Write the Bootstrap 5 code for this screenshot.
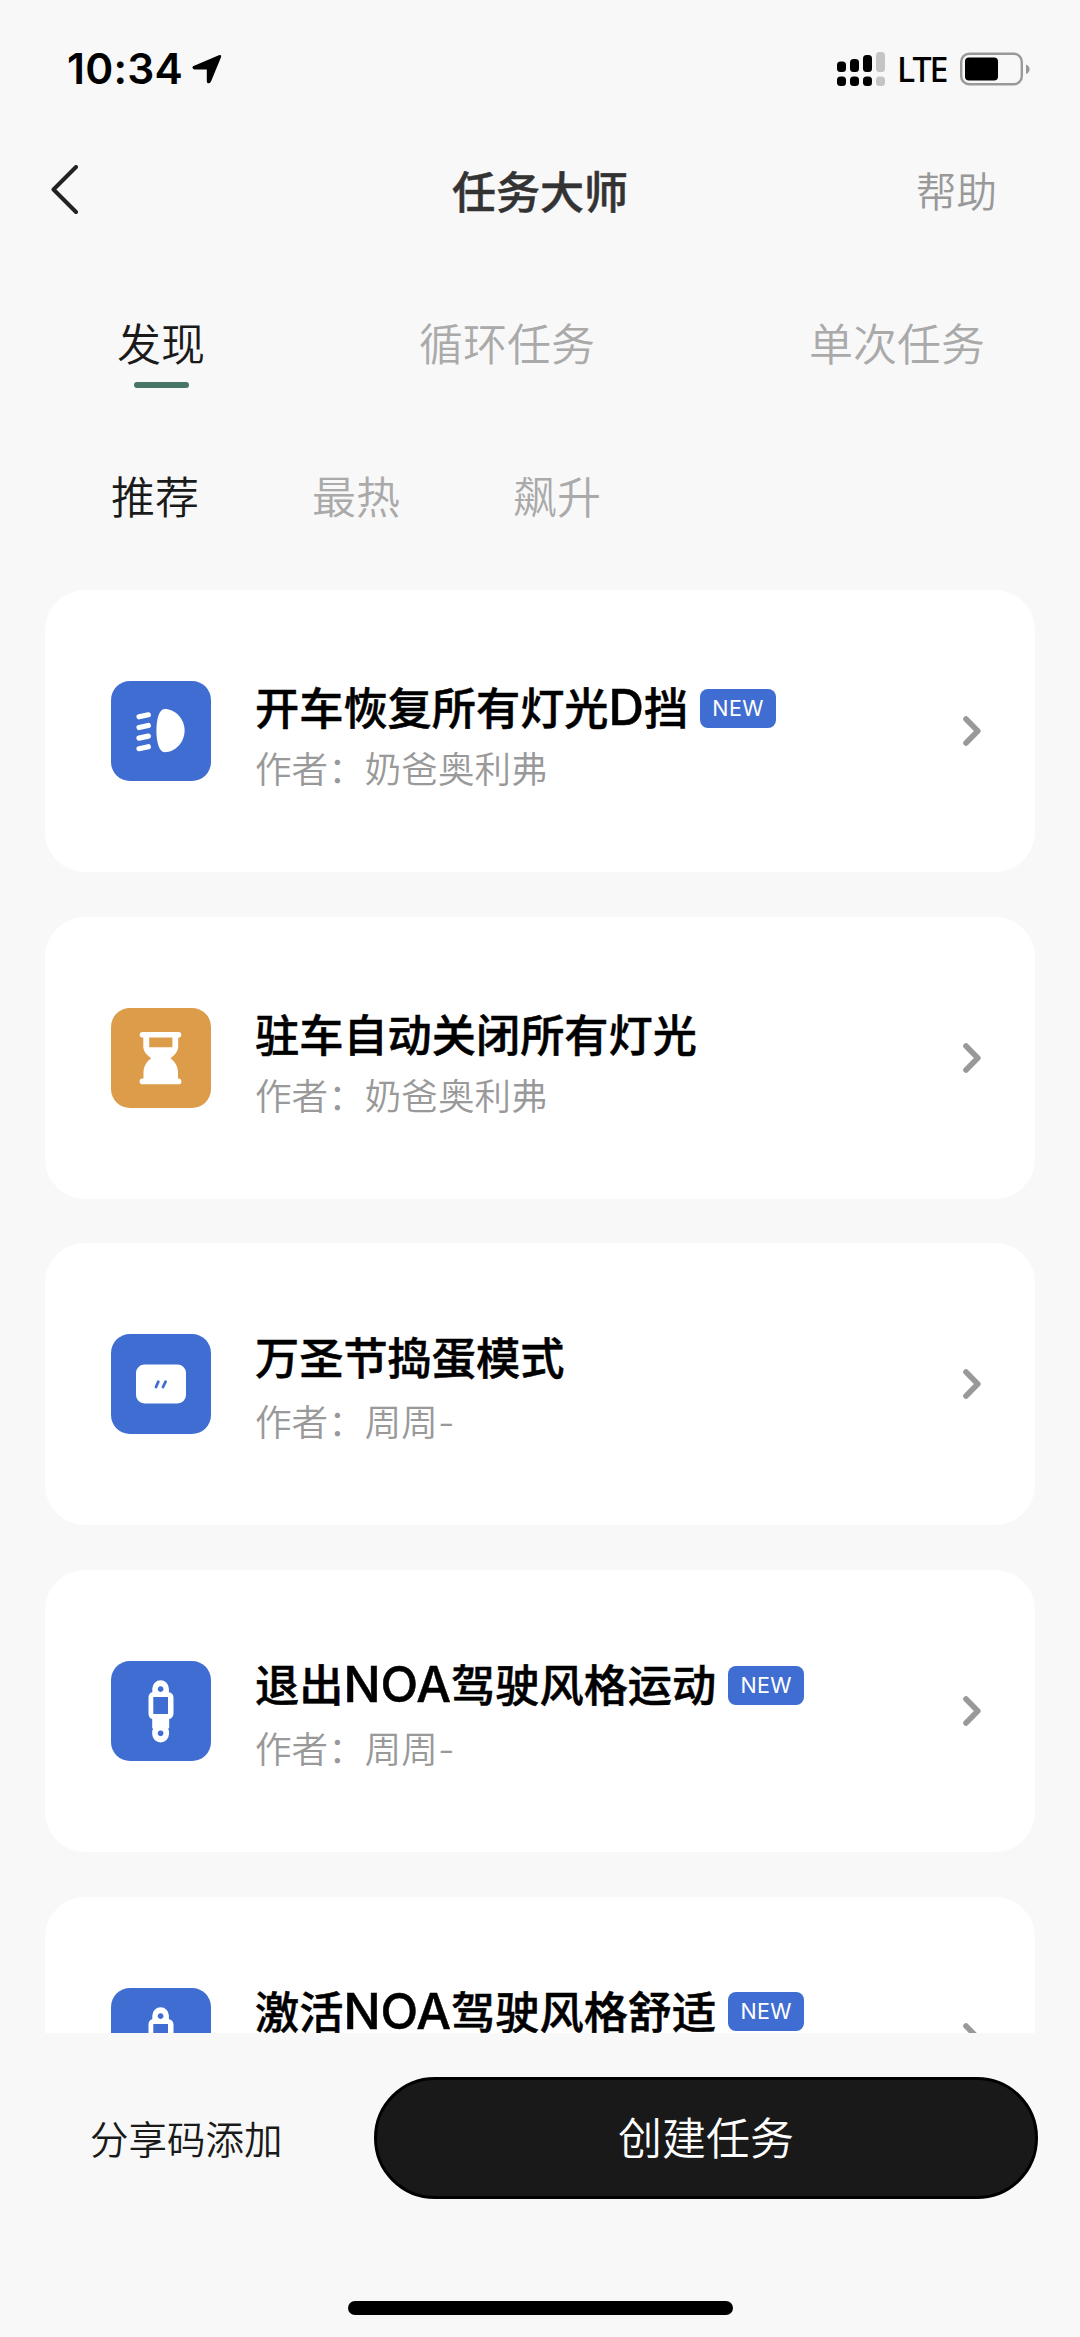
<!DOCTYPE html>
<html lang="zh-CN">
<head>
<meta charset="utf-8">
<meta name="viewport" content="width=device-width, initial-scale=1">
<title>任务大师</title>
<link href="https://cdn.jsdelivr.net/npm/bootstrap@5.3.0/dist/css/bootstrap.min.css" rel="stylesheet">
<style>
  body { background: #f8f8f8; font-family: "Noto Sans CJK SC", sans-serif; color: #1a1a1a; }
  .app { width: 1080px; height: 2337px; }
  svg { display: block; flex: none; }
  .statusbar { height: 138px; padding: 0 50px 0 67px; }
  .clock { font: 600 42.5px/60px Inter, sans-serif; color: #000; letter-spacing: .2px; width: 125px; white-space: nowrap; }
  .lte { font: 500 34px/60px "Noto Sans", sans-serif; color: #000; width: 61px; padding-left: 11px; letter-spacing: -2px; }
  .battery { margin-left: 13px; }
  .titlebar { height: 102px; padding: 2px 50px 0; }
  .titlebar h1 { font-size: 44px; line-height: 60px; font-weight: 500; color: #333; -webkit-text-stroke: .5px #333; }
  .titlebar .side { flex: 0 0 300px; }
  .help { font-size: 40.5px; line-height: 60px; font-weight: 350; color: #999; padding-right: 33px; }
  .tabs { height: 165px; padding: 72px 95px 0 117px; font-size: 44px; line-height: 60px; font-weight: 350; color: #aaa; }
  .tabs .on, .subtabs .on { color: #1a1a1a; }
  .tabs .on::after { content: ""; display: block; width: 55px; height: 6px; margin: 10px auto 0; border-radius: 3px; background: #477668; }
  .subtabs { height: 185px; padding: 60px 111px 0; gap: 113px; font-size: 44px; line-height: 60px; font-weight: 350; color: #aaa; }
  .feed { height: 1442.5px; padding: 0 45px; gap: 44.7px; }
  .task { height: 282px; flex: none; border: 0; border-radius: 40px; padding: 0 53px 0 66px; }
  .tile { width: 100px; height: 100px; border-radius: 19px; margin-right: 44px; flex: none; background: #3f6dd1; }
  .tile.sand { background: #dc9c4a; }
  .name { font-size: 44.2px; line-height: 60px; font-weight: 500; color: #000; white-space: nowrap; height: 60px; -webkit-text-stroke: .5px #000; }
  .latin { font-family: Inter, sans-serif; font-size: 1.11em; line-height: 0; }
  .by { font-family: Inter, "Noto Sans CJK SC", sans-serif; font-size: 36.6px; line-height: 50px; height: 50px; font-weight: 350; color: #999; margin-top: 9px; }
  .info { padding-top: 9px; }
  .up .name { margin-top: -3px; }
  .up .by { margin-top: 12px; }
  .tag { width: 76px; height: 39px; border-radius: 8px; background: #3f6dd1; color: #fff; font: 400 21.5px/39px Inter, sans-serif; letter-spacing: .4px; margin-left: 12px; text-align: center; margin-top: 4px; -webkit-text-stroke: 0; }
  .footer-bar { padding: 44px 42px 0 90px; height: 268px; }
  .share { font-size: 38.5px; line-height: 60px; font-weight: 350; height: 120px; }
  .create { width: 664px; height: 122px; border: 3px solid #000; background: #191919; color: #fff; font-size: 44px; line-height: 60px; font-weight: 350; padding: 0 0 4px; }
  .home { width: 385px; height: 14px; border-radius: 7px; background: #000; }
</style>
<script src="https://cdn.jsdelivr.net/npm/bootstrap@5.3.0/dist/js/bootstrap.bundle.min.js"></script>
</head>
<body>
<svg width="0" height="0" class="position-absolute" aria-hidden="true">
  <defs>
    <symbol id="chev" viewBox="0 0 20 32"><path d="M4 4l11.8 12L4 28" fill="none" stroke="#999" stroke-width="5.6" stroke-linecap="round" stroke-linejoin="round"/></symbol>
    <symbol id="watch" viewBox="0 0 100 100">
      <path fill="#fff" fill-rule="evenodd" d="M41.3 31.3V27.6a8.3 8.3 0 0 1 16.6 0V31.3C60.6 31.6 62.5 33.6 62.5 36.5V52.5C62.5 55.5 60.5 57.6 58.2 58V66.5L57.2 68L58 70V73a8.4 8.4 0 0 1-16.8 0V70L42 68L41.2 66.5V58C39 57.6 37.5 55.5 37.5 52.5V36.5C37.5 33.6 39 31.6 41.3 31.3ZM42.3 36V53H57V36ZM49.6 25.2a2.9 2.9 0 1 0 .01 0ZM49.6 69.4a2.9 2.9 0 1 0 .01 0Z"/>
    </symbol>
  </defs>
</svg>
<div class="app d-flex flex-column overflow-hidden">
  <header class="statusbar d-flex align-items-center">
    <span class="clock">10:34</span>
    <svg width="30" height="30" viewBox="0 0 30 30" class="me-auto"><path d="M26.8 1.2Q29.6.2 29 3.2L19 27.6Q17.8 30 15.4 29L14.8 27.6V15.4H2.3Q-.6 14.2 1 12.2Z"/></svg>
    <svg width="49" height="36" viewBox="0 0 49 36">
      <rect x="0" y="10.500" width="9" height="10.500" rx="3.500"/><rect x="13" y="8" width="9" height="13" rx="3.500"/><rect x="26" y="4" width="9" height="17" rx="3.500"/><rect x="39" y="1" width="9" height="20" rx="3.500" fill="#c4c4c4"/>
      <rect x="0" y="25.500" width="9" height="9.500" rx="3.500"/><rect x="13" y="25.500" width="9" height="9.500" rx="3.500"/><rect x="26" y="25.500" width="9" height="9.500" rx="3.500"/><rect x="39" y="25.500" width="9" height="9.500" rx="3.500" fill="#c4c4c4"/>
    </svg>
    <span class="lte">LTE</span>
    <svg width="70" height="34" viewBox="0 0 70 34" class="battery">
      <rect x="1.200" y="1.700" width="60.600" height="30.600" rx="8" fill="none" stroke="#999" stroke-width="2.400"/>
      <rect x="5" y="5.500" width="33" height="23" rx="4"/><path d="M66 12.500Q69.600 14 69.600 17.200Q69.600 20.500 66 22Z" fill="#999"/>
    </svg>
  </header>

  <nav class="titlebar d-flex align-items-center justify-content-between">
    <div class="side"><svg width="30" height="50" viewBox="0 0 30 50"><path d="M26 2L3.500 24.500L26 47" fill="none" stroke="#222" stroke-width="4" stroke-linecap="round" stroke-linejoin="round"/></svg></div>
    <h1 class="mb-0">任务大师</h1>
    <div class="side text-end help">帮助</div>
  </nav>

  <div class="tabs d-flex justify-content-between">
    <div class="on">发现</div><div>循环任务</div><div>单次任务</div>
  </div>
  <div class="subtabs d-flex">
    <div class="on">推荐</div><div>最热</div><div>飙升</div>
  </div>

  <main class="feed d-flex flex-column overflow-hidden flex-shrink-0">
    <div class="card task flex-row align-items-center">
      <div class="tile"><svg width="100" height="100" viewBox="0 0 100 100"><path d="M28 35.800L37.300 33.800M28 46.500L37.300 44.500M28 57.100L37.300 55.100M28 67.700L37.300 65.700" stroke="#fff" stroke-width="5.200" stroke-linecap="round"/><path fill="#fff" d="M53.500 28C64.500 28 73.600 38 73.600 49.600C73.600 61.200 64.500 71.300 53.500 71.300C48 71.300 45.400 60.500 45.400 49.600C45.400 39 48 28 53.500 28Z"/></svg></div>
      <div class="info me-auto"><div class="name d-flex align-items-center"><span>开车恢复所有灯光<span class="latin">D</span>挡</span><span class="tag">NEW</span></div><div class="by">作者：奶爸奥利弗</div></div>
      <svg width="20" height="32"><use href="#chev"/></svg>
    </div>
    <div class="card task flex-row align-items-center">
      <div class="tile sand"><svg width="100" height="100" viewBox="0 0 100 100"><path fill="#fff" fill-rule="evenodd" d="M31.500 24H67.500A2.800 2.800 0 0 1 67.500 29.600H67.200V39C67 44 62.500 48 59.500 50.200C63.500 53 66.800 58 67 64V70.500H67.500A2.900 2.900 0 0 1 67.500 76.300H31.500A2.900 2.900 0 0 1 31.500 70.500H32.500V64C32.800 58 36 53 40.200 50.200C37 48 32.500 44 32.300 39V29.600H31.500A2.800 2.800 0 0 1 31.500 24ZM38.200 29.600V39.200H61.400V29.600Z"/></svg></div>
      <div class="info me-auto"><div class="name">驻车自动关闭所有灯光</div><div class="by">作者：奶爸奥利弗</div></div>
      <svg width="20" height="32"><use href="#chev"/></svg>
    </div>
    <div class="card task up flex-row align-items-center">
      <div class="tile"><svg width="100" height="100" viewBox="0 0 100 100"><rect x="25" y="30.600" width="50" height="39" rx="8.500" fill="#fff"/><path d="M45 53L47.300 47.700M52 53L54.600 47.700" stroke="#3f6dd1" stroke-width="2.800" stroke-linecap="round"/></svg></div>
      <div class="info me-auto"><div class="name">万圣节捣蛋模式</div><div class="by">作者：周周-</div></div>
      <svg width="20" height="32"><use href="#chev"/></svg>
    </div>
    <div class="card task up flex-row align-items-center">
      <div class="tile"><svg width="100" height="100"><use href="#watch"/></svg></div>
      <div class="info me-auto"><div class="name d-flex align-items-center"><span>退出<span class="latin">NOA</span>驾驶风格运动</span><span class="tag">NEW</span></div><div class="by">作者：周周-</div></div>
      <svg width="20" height="32"><use href="#chev"/></svg>
    </div>
    <div class="card task up flex-row align-items-center">
      <div class="tile"><svg width="100" height="100"><use href="#watch"/></svg></div>
      <div class="info me-auto"><div class="name d-flex align-items-center"><span>激活<span class="latin">NOA</span>驾驶风格舒适</span><span class="tag">NEW</span></div><div class="by">作者：周周-</div></div>
      <svg width="20" height="32"><use href="#chev"/></svg>
    </div>
  </main>

  <footer class="footer-bar d-flex justify-content-between align-items-start flex-shrink-0">
    <span class="share d-flex align-items-center">分享码添加</span>
    <button type="button" class="btn rounded-pill create">创建任务</button>
  </footer>
  <div class="home mx-auto flex-shrink-0"></div>
</div>
</body>
</html>
